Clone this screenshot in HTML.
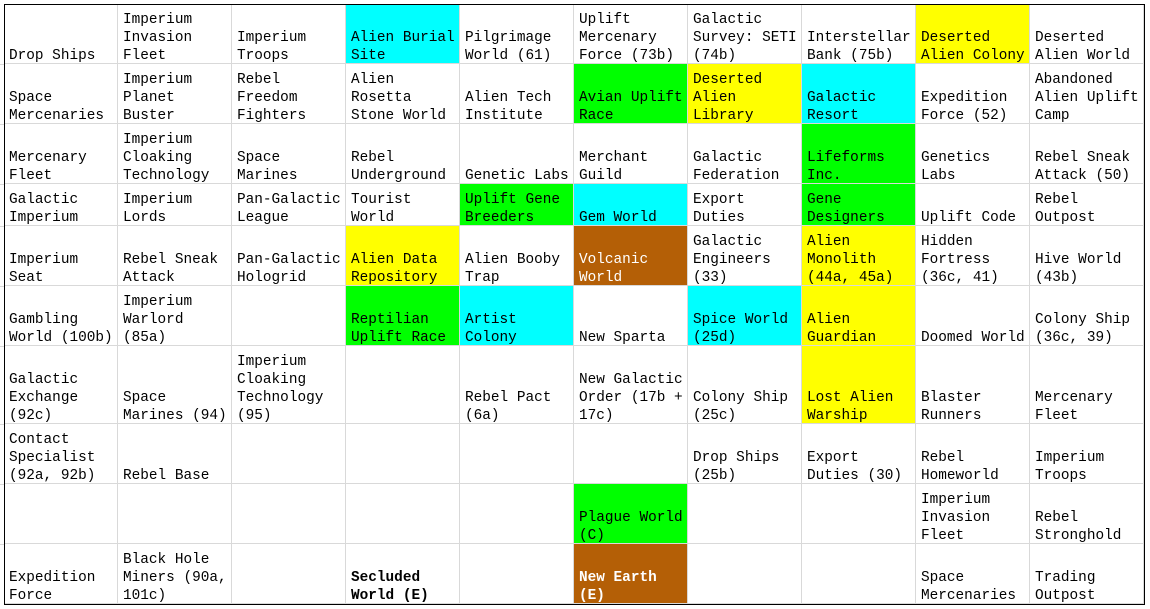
<!DOCTYPE html>
<html><head><meta charset="utf-8"><style>
body{margin:0;width:1150px;height:609px;background:#fff;position:relative;overflow:hidden;font-family:"Liberation Mono",monospace;font-size:14.4px;color:#000}
.c{position:absolute;width:114px;box-sizing:border-box;border-right:1px solid #d9d9d9;border-bottom:1px solid #d9d9d9;display:flex;flex-direction:column;justify-content:flex-end;padding:0 0 0 5px;line-height:18px;white-space:nowrap;overflow:hidden}
.c>div{transform:translateY(2px)}
.cy{background:#00ffff}.ye{background:#ffff00}.gr{background:#00ff00}.br{background:#b45f06;color:#fff}
.b{font-weight:bold}
#frame{position:absolute;left:4px;top:4px;width:1141px;height:601px;border:1px solid #000;box-sizing:border-box;pointer-events:none}
.gl{position:absolute;background:#d9d9d9}
</style></head><body>
<div class="gl" style="left:0;top:64px;width:4px;height:1px"></div>
<div class="gl" style="left:0;top:124px;width:4px;height:1px"></div>
<div class="gl" style="left:0;top:184px;width:4px;height:1px"></div>
<div class="gl" style="left:0;top:226px;width:4px;height:1px"></div>
<div class="gl" style="left:0;top:286px;width:4px;height:1px"></div>
<div class="gl" style="left:0;top:346px;width:4px;height:1px"></div>
<div class="gl" style="left:0;top:424px;width:4px;height:1px"></div>
<div class="gl" style="left:0;top:484px;width:4px;height:1px"></div>
<div class="gl" style="left:0;top:544px;width:4px;height:1px"></div>
<div id="g"></div>
<script>
const rows=[
[60,["Drop Ships","Imperium<br>Invasion<br>Fleet","Imperium<br>Troops","cy|Alien Burial<br>Site","Pilgrimage<br>World (61)","Uplift<br>Mercenary<br>Force (73b)","Galactic<br>Survey: SETI<br>(74b)","Interstellar<br>Bank (75b)","ye|Deserted<br>Alien Colony","Deserted<br>Alien World"]],
[60,["Space<br>Mercenaries","Imperium<br>Planet<br>Buster","Rebel<br>Freedom<br>Fighters","Alien<br>Rosetta<br>Stone World","Alien Tech<br>Institute","gr|Avian Uplift<br>Race","ye|Deserted<br>Alien<br>Library","cy|Galactic<br>Resort","Expedition<br>Force (52)","Abandoned<br>Alien Uplift<br>Camp"]],
[60,["Mercenary<br>Fleet","Imperium<br>Cloaking<br>Technology","Space<br>Marines","Rebel<br>Underground","Genetic Labs","Merchant<br>Guild","Galactic<br>Federation","gr|Lifeforms<br>Inc.","Genetics<br>Labs","Rebel Sneak<br>Attack (50)"]],
[42,["Galactic<br>Imperium","Imperium<br>Lords","Pan-Galactic<br>League","Tourist<br>World","gr|Uplift Gene<br>Breeders","cy|Gem World","Export<br>Duties","gr|Gene<br>Designers","Uplift Code","Rebel<br>Outpost"]],
[60,["Imperium<br>Seat","Rebel Sneak<br>Attack","Pan-Galactic<br>Hologrid","ye|Alien Data<br>Repository","Alien Booby<br>Trap","br|Volcanic<br>World","Galactic<br>Engineers<br>(33)","ye|Alien<br>Monolith<br>(44a, 45a)","Hidden<br>Fortress<br>(36c, 41)","Hive World<br>(43b)"]],
[60,["Gambling<br>World (100b)","Imperium<br>Warlord<br>(85a)","","gr|Reptilian<br>Uplift Race","cy|Artist<br>Colony","New Sparta","cy|Spice World<br>(25d)","ye|Alien<br>Guardian","Doomed World","Colony Ship<br>(36c, 39)"]],
[78,["Galactic<br>Exchange<br>(92c)","Space<br>Marines (94)","Imperium<br>Cloaking<br>Technology<br>(95)","","Rebel Pact<br>(6a)","New Galactic<br>Order (17b +<br>17c)","Colony Ship<br>(25c)","ye|Lost Alien<br>Warship","Blaster<br>Runners","Mercenary<br>Fleet"]],
[60,["Contact<br>Specialist<br>(92a, 92b)","Rebel Base","","","","","Drop Ships<br>(25b)","Export<br>Duties (30)","Rebel<br>Homeworld","Imperium<br>Troops"]],
[60,["","","","","","gr|Plague World<br>(C)","","","Imperium<br>Invasion<br>Fleet","Rebel<br>Stronghold"]],
[60,["Expedition<br>Force","Black Hole<br>Miners (90a,<br>101c)","","b|Secluded<br>World (E)","","brb|New Earth<br>(E)","","","Space<br>Mercenaries","Trading<br>Outpost"]]
];
let y=4,h="";
for(const [rh,cells] of rows){
 cells.forEach((t,i)=>{
  let cls="c";
  if(t.includes("|")){const [k,v]=t.split("|");t=v;
   if(k=="brb")cls+=" br b";else cls+=" "+k;}
  h+=`<div class="${cls}" style="left:${4+114*i}px;top:${y}px;height:${rh}px"><div>${t}</div></div>`;
 });
 y+=rh;
}
document.getElementById("g").innerHTML=h;
</script>
<div id="frame"></div>
</body></html>
